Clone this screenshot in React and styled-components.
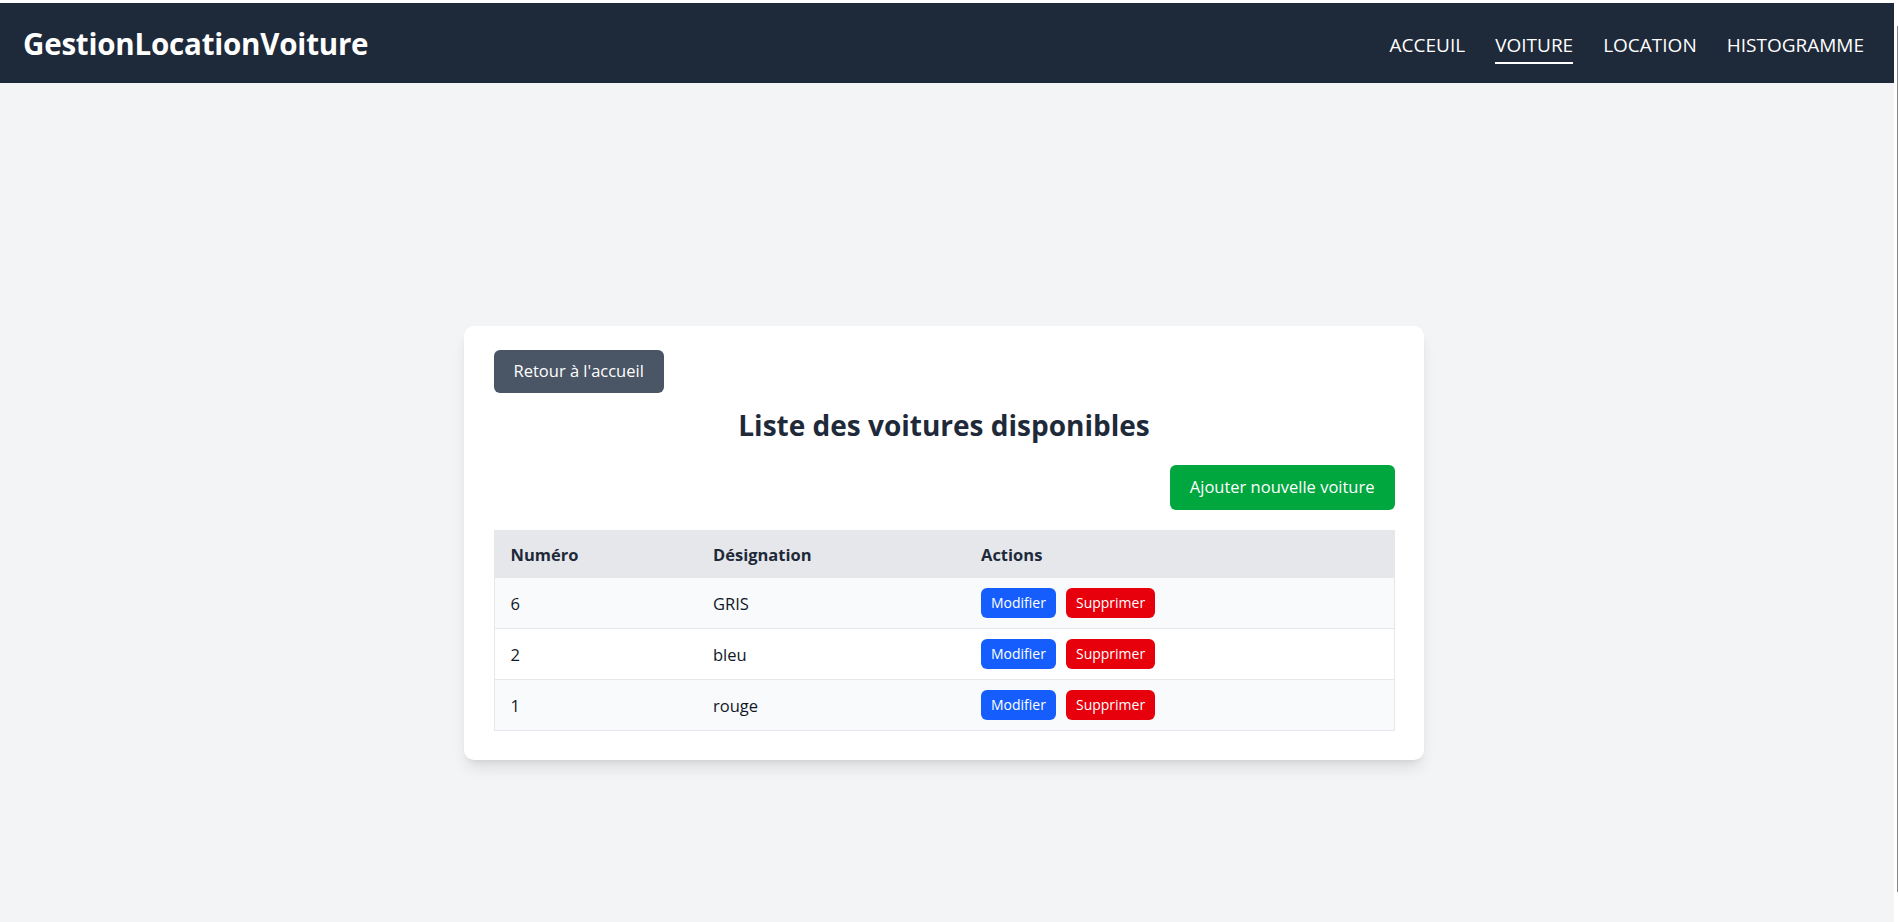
import React from "react";
import styled, { createGlobalStyle } from "styled-components";

const GlobalStyle = createGlobalStyle`
  html, body { margin: 0; padding: 0; }
  body {
    background: #ffffff;
    padding-top: 3px;
    overflow: hidden;
    font-family: "Open Sans", "Noto Sans", "Liberation Sans", sans-serif;
    color: #101828;
  }
  * { box-sizing: border-box; }
`;

const Page = styled.div`
  margin-right: 5px;
  background: #f3f4f6;
  height: calc(100vh - 3px);
  display: flex;
  flex-direction: column;
`;

const ScrollTrack = styled.div`
  position: fixed;
  top: 26px;
  bottom: 30px;
  right: 1px;
  width: 1px;
  background: #8a8a8a;
`;

const Header = styled.header`
  height: 80px;
  flex: none;
  background: #1e2939;
  display: flex;
  align-items: center;
  justify-content: space-between;
  padding: 0 30px 0 23px;
`;

const Logo = styled.div`
  color: #ffffff;
  font-weight: 700;
  font-size: 29.5px;
  letter-spacing: -0.2px;
  line-height: 1;
  margin-top: 1px;
`;

const Nav = styled.nav`
  display: flex;
  align-items: center;
  gap: 30px;
  margin-top: 9px;
`;

const NavLink = styled.a`
  color: #ffffff;
  font-size: 19px;
  line-height: 26px;
  text-decoration: none;
  padding-bottom: 4px;
  border-bottom: 2px solid ${(p) => (p.$active ? "#ffffff" : "transparent")};
  cursor: pointer;
`;

const Main = styled.main`
  flex: 1;
  display: flex;
  justify-content: center;
  align-items: flex-start;
  padding: 243px 7px 0 0;
`;

const Card = styled.section`
  width: 960px;
  background: #ffffff;
  border-radius: 10px;
  box-shadow: 0 10px 15px -3px rgba(0, 0, 0, 0.1), 0 4px 6px -4px rgba(0, 0, 0, 0.1);
  padding: 24px 29px 29px 30px;
  display: flex;
  flex-direction: column;
`;

const Button = styled.button`
  border: none;
  color: #ffffff;
  font-family: inherit;
  cursor: pointer;
  background: ${(p) => p.$bg};
  border-radius: 6px;
  font-size: ${(p) => (p.$small ? "14px" : "16.5px")};
  height: ${(p) => p.$h}px;
  padding: 0 ${(p) => p.$px}px;
  line-height: 1;
  white-space: nowrap;
`;

const BackButton = styled(Button)`
  align-self: flex-start;
`;

const Title = styled.h1`
  margin: 14px 0 0;
  text-align: center;
  font-size: 28px;
  line-height: 36px;
  font-weight: 700;
  color: #1e2939;
`;

const AddRow = styled.div`
  display: flex;
  justify-content: flex-end;
  margin-top: 22px;
  margin-bottom: 20px;
`;

const Table = styled.table`
  width: 900px;
  border-collapse: collapse;
  table-layout: fixed;
  border: 1px solid #e5e7eb;
`;

const HeadRow = styled.tr`
  background: #e5e7eb;
`;

const Th = styled.th`
  text-align: left;
  height: 47px;
  padding: 0 16px;
  font-size: 16.5px;
  font-weight: 700;
  color: #1e2939;
`;

const Row = styled.tr`
  background: ${(p) => (p.$odd ? "#f9fafb" : "#ffffff")};
  border-top: 1px solid #e5e7eb;
`;

const Td = styled.td`
  height: 51px;
  padding: 0 16px;
  font-size: 16.5px;
  color: #101828;
`;

const Actions = styled.div`
  display: flex;
  gap: 10px;
  align-items: center;
`;

const cars = [
  { id: 6, name: "GRIS" },
  { id: 2, name: "bleu" },
  { id: 1, name: "rouge" },
];

export default function App() {
  return (
    <>
      <GlobalStyle />
      <Page>
        <Header>
          <Logo>GestionLocationVoiture</Logo>
          <Nav>
            <NavLink>ACCEUIL</NavLink>
            <NavLink $active>VOITURE</NavLink>
            <NavLink>LOCATION</NavLink>
            <NavLink>HISTOGRAMME</NavLink>
          </Nav>
        </Header>
        <Main>
          <Card>
            <BackButton $bg="#4a5565" $h={43} $px={20}>
              Retour à l'accueil
            </BackButton>
            <Title>Liste des voitures disponibles</Title>
            <AddRow>
              <Button $bg="#00a63e" $h={45} $px={20}>
                Ajouter nouvelle voiture
              </Button>
            </AddRow>
            <Table>
              <colgroup>
                <col style={{ width: 203 }} />
                <col style={{ width: 268 }} />
                <col style={{ width: 429 }} />
              </colgroup>
              <thead>
                <HeadRow>
                  <Th>Numéro</Th>
                  <Th>Désignation</Th>
                  <Th>Actions</Th>
                </HeadRow>
              </thead>
              <tbody>
                {cars.map((c, i) => (
                  <Row key={c.id} $odd={i % 2 === 0}>
                    <Td>{c.id}</Td>
                    <Td>{c.name}</Td>
                    <Td>
                      <Actions>
                        <Button $small $bg="#155dfc" $h={30} $px={10}>
                          Modifier
                        </Button>
                        <Button $small $bg="#e7000b" $h={30} $px={10}>
                          Supprimer
                        </Button>
                      </Actions>
                    </Td>
                  </Row>
                ))}
              </tbody>
            </Table>
          </Card>
        </Main>
      </Page>
      <ScrollTrack />
    </>
  );
}
